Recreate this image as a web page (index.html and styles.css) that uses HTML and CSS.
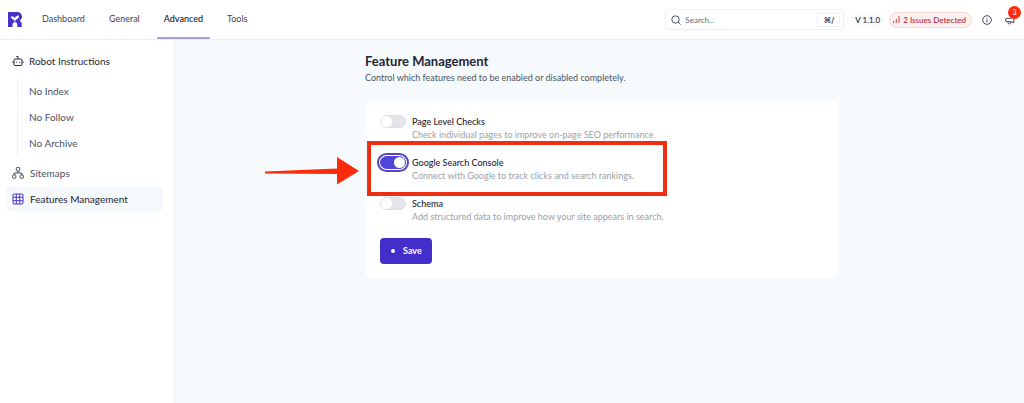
FILE: index.html
```html
<!DOCTYPE html>
<html lang="en">
<head>
    <meta charset="UTF-8">
    <meta name="viewport" content="width=device-width, initial-scale=1.0">
    <title>Feature Management</title>
    <link rel="stylesheet" href="styles.css">
</head>
<body>
    <header class="topbar">
        <a href="#" class="logo" aria-label="Home">
            <svg width="14" height="16" viewBox="0 0 14 16">
                <path fill="#4733c9" d="M0 0h9a4.6 4.6 0 0 1 3.200 8.200c-.6.6-.6 1 .1 1.300 1 .4 1.400 1 1.400 2.300V15H9.300v-2c0-1.800-.7-2.800-2.300-2.800S4.500 11.200 4.500 13v2H0z"/>
                <path fill="#fff" d="M3 4.200c2 0 3.300.7 3.800 2C7.400 4.500 8.600 3.600 11 3.600 10.900 6.200 9.700 7.600 7.500 7.800L7 11 6 7.800C4.200 7.700 3.100 6.400 3 4.200z"/>
            </svg>
        </a>
        <nav class="tabs">
            <a href="#" class="tab">Dashboard</a>
            <a href="#" class="tab">General</a>
            <a href="#" class="tab active">Advanced</a>
            <a href="#" class="tab">Tools</a>
        </nav>
        <div class="tools">
            <label class="search">
                <svg class="icon" width="10" height="10" viewBox="0 0 10 10"><circle cx="4.500" cy="4.500" r="3.700"/><path d="M7.200 7.200l2.300 2.300"/></svg>
                <input type="text" placeholder="Search..." aria-label="Search">
                <kbd>⌘/</kbd>
            </label>
            <span class="version">V 1.1.0</span>
            <a href="#" class="issues">
                <svg width="7" height="7" viewBox="0 0 7 7"><path d="M.6 7V5M3.300 7V3M6 7V0" stroke="#c2414b" fill="none"/></svg>
                2 Issues Detected
            </a>
            <button class="icon-btn" aria-label="Information">
                <svg class="icon" width="10" height="10" viewBox="0 0 10 10"><circle cx="5" cy="5" r="4.300"/><path d="M5 4.500v2.800M5 2.500v1"/></svg>
            </button>
            <button class="icon-btn" aria-label="Announcements">
                <svg class="icon" width="10" height="10" viewBox="0 0 10 10"><path d="M8.800 1.200v6.600L6 6.700H2.200a1.500 1.500 0 0 1 0-3.400H6zM3 6.800c0 1.400.5 2.200 1.400 2.200S5.800 8.200 5.800 6.800"/></svg>
                <span class="badge">3</span>
            </button>
        </div>
    </header>

    <div class="layout">
        <aside class="sidebar">
            <a href="#" class="side-link group">
                <svg class="icon" width="12" height="12" viewBox="0 0 12 12"><rect x="2" y="4" width="8" height="6.500" rx="1"/><path d="M6 4V1.500H4.300M.3 7.200H2M10 7.200h1.700M4.500 6.700v1M7.500 6.700v1"/></svg>
                Robot Instructions
            </a>
            <div class="sub-links">
                <a href="#" class="sub-link">No Index</a>
                <a href="#" class="sub-link">No Follow</a>
                <a href="#" class="sub-link">No Archive</a>
            </div>
            <a href="#" class="side-link">
                <svg class="icon" width="12" height="12" viewBox="0 0 12 12"><rect x="4.300" y=".6" width="3.400" height="3.400" rx=".5"/><rect x=".6" y="8" width="3.200" height="3.200" rx=".5"/><rect x="8.200" y="8" width="3.200" height="3.200" rx=".5"/><path d="M6 4v2M2.200 8V6h7.600v2"/></svg>
                Sitemaps
            </a>
            <a href="#" class="side-link active">
                <svg class="icon" width="12" height="12" viewBox="0 0 12 12"><rect x="1" y="1" width="10" height="10" rx="1"/><path d="M4.300 1v10M7.700 1v10M1 4.300h10M1 7.700h10"/></svg>
                Features Management
            </a>
        </aside>

        <main class="main">
            <div class="content">
                <h1>Feature Management</h1>
                <p class="intro">Control which features need to be enabled or disabled completely.</p>

                <form class="card">
                    <div class="feature">
                        <input type="checkbox" class="switch" id="page-checks">
                        <div class="feature-text">
                            <label for="page-checks">Page Level Checks</label>
                            <p>Check individual pages to improve on-page SEO performance.</p>
                        </div>
                    </div>
                    <div class="feature highlighted">
                        <input type="checkbox" class="switch" id="search-console" checked>
                        <div class="feature-text">
                            <label for="search-console">Google Search Console</label>
                            <p>Connect with Google to track clicks and search rankings.</p>
                        </div>
                        <svg class="arrow" width="94" height="28" viewBox="0 0 94 28">
                            <path fill="#fb2c0b" d="M0 14.500L72 11.500V0L94 14 72 27.500V17L0 16.500z"/>
                        </svg>
                    </div>
                    <div class="feature">
                        <input type="checkbox" class="switch" id="schema">
                        <div class="feature-text">
                            <label for="schema">Schema</label>
                            <p>Add structured data to improve how your site appears in search.</p>
                        </div>
                    </div>
                    <button type="button" class="save-btn">Save</button>
                </form>
            </div>
        </main>
    </div>
</body>
</html>
```
FILE: styles.css
```css
*,
*::before,
*::after {
    margin: 0;
    padding: 0;
    box-sizing: border-box;
}

body {
    font-family: Lato, "Liberation Sans", sans-serif;
    font-size: 9px;
    line-height: 12px;
    color: #1e2433;
    background: #fff;
    min-height: 100vh;
    display: flex;
    flex-direction: column;
}

a {
    color: inherit;
    text-decoration: none;
}

button,
input {
    font: inherit;
    color: inherit;
}

.icon {
    fill: none;
    stroke: currentColor;
    flex-shrink: 0;
}

/* top bar */
.topbar {
    display: flex;
    height: 40px;
    padding: 0 9px 0 8px;
    border-bottom: 1px solid #eceef2;
}

.logo {
    display: flex;
    align-items: center;
}

.tabs {
    display: flex;
    margin-left: 13px;
    gap: 10px;
}

.tab {
    display: flex;
    align-items: center;
    padding: 1px 7px 0;
    border-bottom: 2px solid transparent;
    color: #3f4653;
}

.tab.active {
    color: #11151f;
    font-weight: 500;
    border-color: #a9a0dd;
}

.tools {
    display: flex;
    align-items: center;
    margin-left: auto;
    font-size: 8px;
}

.search {
    display: flex;
    align-items: center;
    width: 179px;
    height: 21px;
    padding: 0 3px 0 5px;
    border: 1px solid #eff0f3;
    border-radius: 3px;
    color: #4b5260;
}

.search input {
    flex: 1;
    min-width: 0;
    margin-left: 4px;
    border: none;
    outline: none;
    background: none;
}

.search input::placeholder {
    color: #666c78;
}

.search kbd {
    padding: 0 5px;
    border: 1px solid #f0f1f4;
    border-radius: 2px;
    font-family: Inter, "DejaVu Sans", sans-serif;
    font-weight: 600;
}

.version {
    margin-left: 7px;
    padding: 1px 4px;
    border-radius: 8px;
    background: #f8fafc;
    font-weight: 500;
}

.issues {
    display: flex;
    align-items: center;
    gap: 3px;
    margin-left: 5px;
    padding: 1px 5px 1px 3px;
    border: 1px solid #f9d6d6;
    border-radius: 8px;
    background: #fdf0f0;
    color: #b32638;
    font-weight: 500;
}

.icon-btn {
    position: relative;
    display: flex;
    margin-left: 10px;
    border: none;
    background: none;
    color: #3f4653;
}

.icon-btn + .icon-btn {
    margin-left: 13px;
}

.badge {
    position: absolute;
    top: -9px;
    right: -6px;
    width: 13px;
    height: 13px;
    border-radius: 50%;
    background: #fb2c0b;
    color: #fff;
    font-size: 7px;
    line-height: 13px;
    text-align: center;
}

/* sidebar */
.layout {
    display: flex;
    flex: 1;
}

.sidebar {
    width: 175px;
    padding: 9px 11px 10px 6px;
    border-right: 1px solid #eceff3;
    font-size: 10px;
    color: #4b5260;
}

.side-link {
    display: flex;
    align-items: center;
    gap: 6px;
    height: 24px;
    padding: 0 6px;
    border-radius: 3px;
    margin-bottom: 2px;
}

.side-link.group {
    gap: 5px;
    color: #242a37;
}

.side-link.active {
    background: #f6f9fb;
    color: #1e2433;
}

.side-link.active .icon {
    color: #4a35c8;
}

.sub-links {
    margin: 5px 0 5px 11px;
    border-left: 1px solid #eef0f3;
}

.sub-link {
    display: flex;
    align-items: center;
    height: 26px;
    padding-left: 11px;
}

/* content */
.main {
    flex: 1;
    padding: 13px 16px 16px 21px;
    background: #f7fafc;
}

.content {
    max-width: 474px;
    margin: 0 auto;
}

h1 {
    font-size: 13px;
    line-height: 16px;
    font-weight: 700;
}

.intro {
    margin-top: 3px;
    color: #4b5260;
}

.card {
    margin-top: 17px;
    padding: 14px 15px;
    border-radius: 6px;
    background: #fff;
}

.feature {
    position: relative;
    display: flex;
    gap: 6px;
    margin-bottom: 15px;
}

.feature label {
    display: block;
    line-height: 14px;
    font-weight: 500;
}

.feature p {
    line-height: 12px;
    color: #9a9fa9;
}

.switch {
    appearance: none;
    width: 26px;
    height: 13px;
    border: 1px solid #dddfe5;
    border-radius: 7px;
    background: #e4e5eb;
}

.switch::before {
    content: "";
    display: block;
    width: 11px;
    height: 11px;
    border-radius: 50%;
    background: #fff;
}

.switch:checked {
    border-color: #4f46d8;
    background: #4f46d8;
    outline: 2px solid #4f46c0;
    outline-offset: 1px;
}

.switch:checked::before {
    margin-left: 13px;
}

/* red callout around the row */
.highlighted::after {
    content: "";
    position: absolute;
    top: -15px;
    left: -13px;
    width: 300px;
    height: 55px;
    border: 4px solid #ee2e12;
    z-index: 1;
}

.arrow {
    position: absolute;
    top: 1px;
    left: -115px;
}

.save-btn {
    display: flex;
    align-items: center;
    gap: 8px;
    height: 26px;
    padding: 0 10px 0 11px;
    border: none;
    border-radius: 4px;
    background: #432dcb;
    color: #fff;
    font-weight: 700;
}

.save-btn::before {
    content: "";
    width: 4px;
    height: 4px;
    border-radius: 50%;
    background: #fff;
}
```
